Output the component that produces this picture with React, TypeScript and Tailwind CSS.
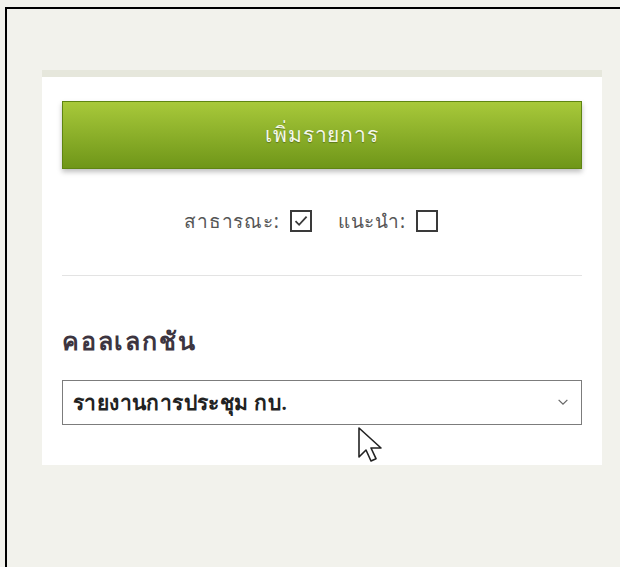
import React from "react";

function CheckBox({ checked }: { checked?: boolean }) {
  return (
    <span className="inline-flex h-[22px] w-[22px] items-center justify-center border-2 border-[#3a3a3a] bg-white">
      {checked && (
        <svg viewBox="0 0 16 16" className="h-[16px] w-[16px]" fill="none" stroke="#3a3a3a" strokeWidth="1.8">
          <path d="M2.5 8.2l3.6 3.6L13.6 3.6" />
        </svg>
      )}
    </span>
  );
}

function Cursor() {
  return (
    <svg viewBox="0 0 24 36" className="pointer-events-none absolute left-[358px] top-[427px] h-[36px] w-[24px]">
      <path
        d="M1 1v29l7-7 5 11 5-2.3-5-10.7h10z"
        fill="#fff"
        stroke="#222"
        strokeWidth="1.6"
        strokeLinejoin="round"
      />
    </svg>
  );
}

export default function App() {
  return (
    <div className="relative h-screen w-screen overflow-hidden bg-[#f2f2ec] pl-[5px] pt-[7px] font-['Noto_Sans',sans-serif]">
      <div className="h-full border-l-2 border-t-2 border-black pl-[35px] pt-[61px]">
        {/* side panel */}
        <div className="w-[560px] border-t-[7px] border-[#e6e7dc] bg-white px-5 pb-10 pt-6">
          <button className="flex h-[68px] w-full items-center justify-center border border-[#5f8512] bg-gradient-to-b from-[#a8c93a] to-[#6f9618] text-[21px] tracking-[0.8px] text-[#f4f8ea] shadow-[0_3px_5px_rgba(0,0,0,0.25)] [text-shadow:0_1px_1px_rgba(0,0,0,0.3)]">
            เพิ่มรายการ
          </button>

          <div className="mt-[41px] flex h-[22px] items-center justify-center gap-[10px] pr-[22px] text-[19px] tracking-[0.8px] text-[#555]">
            <span>สาธารณะ:</span>
            <CheckBox checked />
            <span className="ml-[16px]">แนะนำ:</span>
            <CheckBox />
          </div>

          <div className="mt-[43px] border-t border-[#e3e3e3]" />

          <h3 className="mt-[50px] text-[25px] font-bold leading-7 tracking-[1.8px] text-[#3d3540]">คอลเลกชัน</h3>

          <div className="mt-[26px] flex h-[45px] items-center justify-between border border-[#7c7c7c] pl-[10px] pr-[12px]">
            <span className="text-[21px] font-semibold tracking-[0.4px] text-[#222]">รายงานการประชุม กบ.</span>
            <svg viewBox="0 0 12 8" className="h-[7px] w-[12px]" fill="none" stroke="#666" strokeWidth="1.4">
              <path d="M1 1l5 5 5-5" />
            </svg>
          </div>
        </div>
      </div>
      <Cursor />
    </div>
  );
}
